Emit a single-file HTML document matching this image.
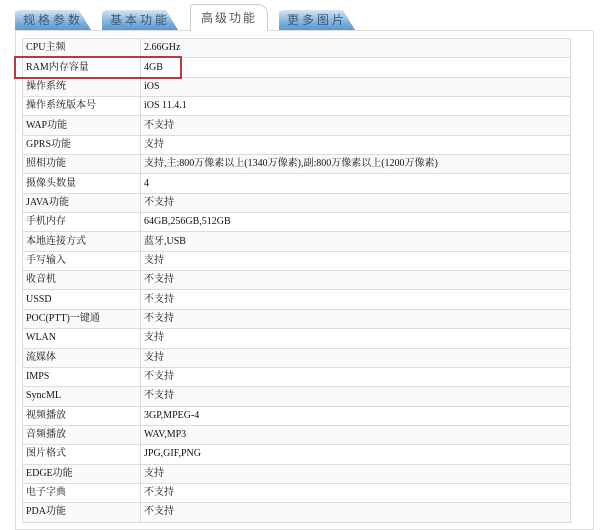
<!DOCTYPE html>
<html><head><meta charset="utf-8"><style>
body{margin:0;width:600px;height:520px;background:#fff;overflow:hidden;font-family:"Liberation Sans","Noto Sans CJK SC",sans-serif;position:relative}
.tab{position:absolute;top:10px;height:20px;width:76px;background:linear-gradient(#d4e6f5,#7fb2de 60%,#5d97cc);border-radius:3px 12px 0 0;clip-path:polygon(0 100%,0 10%,4px 0,84% 0,100% 100%);font-size:12px;color:#3a5a7a;letter-spacing:3px;line-height:20px;padding-left:8px;box-sizing:border-box}
.act{position:absolute;top:4px;left:190px;width:78px;height:27px;background:#fff;border:1px solid #ccc;border-bottom:none;border-radius:3px 10px 0 0;font-size:12px;color:#555;letter-spacing:2px;line-height:26px;text-align:center;box-sizing:border-box;z-index:2}
.box{position:absolute;left:15px;top:30px;width:579px;height:500px;border:1px solid #ddd;box-sizing:border-box}
table{position:absolute;left:22px;top:38px;width:549px;border-collapse:collapse;font-size:10px;color:#111;font-family:"Liberation Serif","Noto Serif CJK SC",serif}
td{border:1px solid #dcdcdc;height:18.35px;padding:0 0 0 3px;line-height:18px;white-space:nowrap}
td:first-child{width:114px}
tr:nth-child(odd){background:#f9fafc}
.hl{position:absolute;left:14px;top:56px;width:168px;height:23px;border:2px solid #b8393f;box-sizing:border-box}
</style></head><body>
<div class="tab" style="left:15px">规格参数</div>
<div class="tab" style="left:102px">基本功能</div>
<div class="act">高级功能</div>
<div class="tab" style="left:279px">更多图片</div>
<div class="box"></div>
<table>
<tr><td>CPU主频</td><td>2.66GHz</td></tr>
<tr><td>RAM内存容量</td><td>4GB</td></tr>
<tr><td>操作系统</td><td>iOS</td></tr>
<tr><td>操作系统版本号</td><td>iOS 11.4.1</td></tr>
<tr><td>WAP功能</td><td>不支持</td></tr>
<tr><td>GPRS功能</td><td>支持</td></tr>
<tr><td>照相功能</td><td>支持,主:800万像素以上(1340万像素),副:800万像素以上(1200万像素)</td></tr>
<tr><td>摄像头数量</td><td>4</td></tr>
<tr><td>JAVA功能</td><td>不支持</td></tr>
<tr><td>手机内存</td><td>64GB,256GB,512GB</td></tr>
<tr><td>本地连接方式</td><td>蓝牙,USB</td></tr>
<tr><td>手写输入</td><td>支持</td></tr>
<tr><td>收音机</td><td>不支持</td></tr>
<tr><td>USSD</td><td>不支持</td></tr>
<tr><td>POC(PTT)一键通</td><td>不支持</td></tr>
<tr><td>WLAN</td><td>支持</td></tr>
<tr><td>流媒体</td><td>支持</td></tr>
<tr><td>IMPS</td><td>不支持</td></tr>
<tr><td>SyncML</td><td>不支持</td></tr>
<tr><td>视频播放</td><td>3GP,MPEG-4</td></tr>
<tr><td>音频播放</td><td>WAV,MP3</td></tr>
<tr><td>图片格式</td><td>JPG,GIF,PNG</td></tr>
<tr><td>EDGE功能</td><td>支持</td></tr>
<tr><td>电子字典</td><td>不支持</td></tr>
<tr><td>PDA功能</td><td>不支持</td></tr>
</table>
<div class="hl"></div>
</body></html>
